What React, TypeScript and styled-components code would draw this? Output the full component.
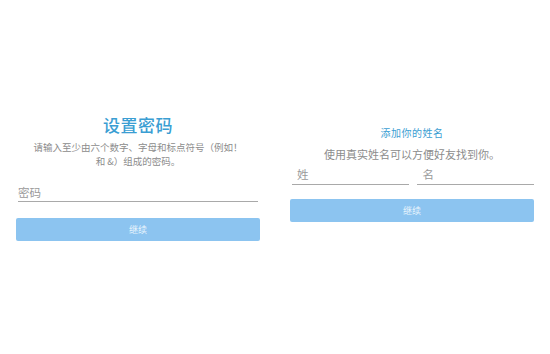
import styled, { createGlobalStyle } from "styled-components";

const Global = createGlobalStyle`
    html, body {
        margin: 0;
        padding: 0;
        background: #ffffff;
        font-family: "Noto Sans CJK SC", "Noto Sans", sans-serif;
    }
`

const Page = styled.div`
    display: flex;
    width: 550px;
    height: 354px;
    background: #ffffff;
`

const Panel = styled.section<{ $top: number; $left: number; $right: number }>`
    width: 275px;
    box-sizing: border-box;
    padding: ${p => p.$top}px ${p => p.$right}px 0 ${p => p.$left}px;
    display: flex;
    flex-direction: column;
`

const Title = styled.h1<{ $size: number; $weight: number }>`
    margin: 0;
    font-size: ${p => p.$size}px;
    line-height: ${p => p.$size + 2}px;
    font-weight: ${p => p.$weight};
    color: #3b9ed3;
    text-align: center;
    letter-spacing: 0.5px;
`

const Subtitle = styled.p<{ $size: number; $gap: number }>`
    margin: ${p => p.$gap}px 0 0;
    font-size: ${p => p.$size}px;
    line-height: 14px;
    color: #8c8c8c;
    text-align: center;
`

const FieldRow = styled.div<{ $gap: number }>`
    display: flex;
    gap: 6px;
    margin-top: ${p => p.$gap}px;
`

const Field = styled.div<{ $inset: number; $pad: number; $indent: number }>`
    flex: 1;
    margin: 0 ${p => p.$inset}px;
    padding: 0 0 ${p => p.$pad}px ${p => p.$indent}px;
    border-bottom: 1px solid #a9a9a9;
    font-size: 11.5px;
    line-height: 14px;
    color: #9a9a9a;
`

const Button = styled.button<{ $gap: number }>`
    margin-top: ${p => p.$gap}px;
    height: 23px;
    border: none;
    border-radius: 2px;
    background: #8cc4f0;
    color: #eaf5fd;
    font-family: inherit;
    font-size: 9px;
    padding: 0;
`

export default function App() {
    return (
        <Page>
            <Global/>
            <Panel $top={115} $left={16} $right={15}>
                <Title $size={17} $weight={500}>设置密码</Title>
                <Subtitle $size={9.5} $gap={6}>
                    请输入至少由六个数字、字母和标点符号（例如！<br/>和 &）组成的密码。
                </Subtitle>
                <FieldRow $gap={17}>
                    <Field $inset={2} $pad={2} $indent={0}>密码</Field>
                </FieldRow>
                <Button $gap={16}>继续</Button>
            </Panel>
            <Panel $top={127} $left={15} $right={16}>
                <Title $size={10} $weight={400}>添加你的姓名</Title>
                <Subtitle $size={11} $gap={8}>使用真实姓名可以方便好友找到你。</Subtitle>
                <FieldRow $gap={6}>
                    <Field $inset={2} $pad={3} $indent={5}>姓</Field>
                    <Field $inset={0} $pad={3} $indent={6}>名</Field>
                </FieldRow>
                <Button $gap={14}>继续</Button>
            </Panel>
        </Page>
    );
}
